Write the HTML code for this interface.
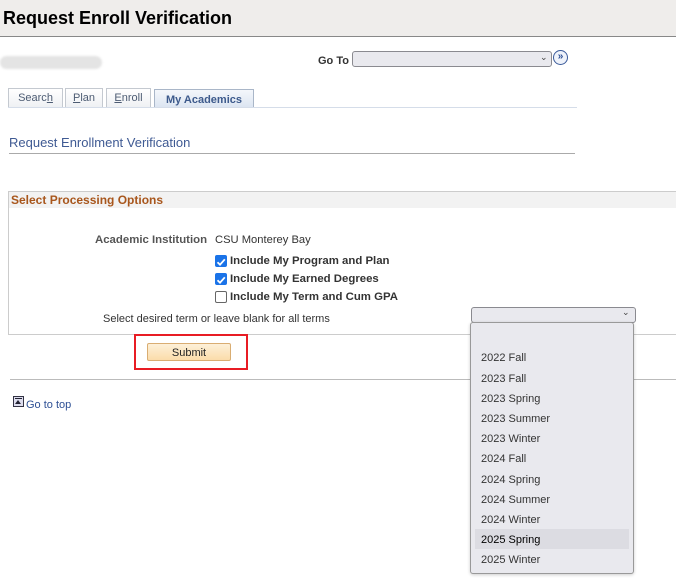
<!DOCTYPE html>
<html><head><style>
*{margin:0;padding:0;box-sizing:border-box}
body{width:676px;height:579px;position:relative;background:#fff;font-family:"Liberation Sans",Arial,sans-serif;overflow:hidden;color:#333}
.a{position:absolute;white-space:nowrap}
.tab{position:absolute;top:88px;height:20px;border:1px solid #c4c9d0;border-bottom:none;background:linear-gradient(#fff,#eef0f3);font-size:11px;color:#4d5c73;text-align:center;line-height:19px}
.cb{position:absolute;left:215px;width:12px;height:12px;border-radius:2px}
.on{background:#1a73e8}
.off{border:1px solid #666;background:#fff}
.lbl{position:absolute;left:230px;font-size:11.4px;font-weight:bold;color:#333}
.it{position:absolute;left:481px;font-size:11px;color:#333}
</style></head><body>
<div class="a" style="left:0;top:0;width:676px;height:37px;background:#efedeb;border-bottom:1px solid #888"></div>
<div class="a" style="left:3px;top:8px;font-size:18px;font-weight:bold;color:#000">Request Enroll Verification</div>
<div class="a" style="left:0;top:56px;width:102px;height:13px;background:#e4e4e4;border-radius:7px;filter:blur(1px)"></div>
<div class="a" style="left:318px;top:55px;font-size:11px;font-weight:bold;color:#333">Go To</div>
<div class="a" style="left:352px;top:51px;width:200px;height:16px;background:#e9e9ee;border:1px solid #8a8a90;border-radius:3px"></div>
<div class="a" style="left:540px;top:52px;font-size:9px;color:#444">&#8964;</div>
<div class="a" style="left:553px;top:50px;width:15px;height:15px;border:1px solid #3a5a9a;border-radius:50%;background:#eef2fa;font-size:10px;font-weight:bold;color:#2d4f94;text-align:center;line-height:12px">»</div>
<div class="tab" style="left:8px;width:55px">Searc<u>h</u></div>
<div class="tab" style="left:65px;width:38px"><u>P</u>lan</div>
<div class="tab" style="left:106px;width:45px"><u>E</u>nroll</div>
<div class="tab" style="left:154px;width:100px;background:linear-gradient(#f4f7fb,#dbe4f1);border-color:#a9b6c8;font-weight:bold;color:#3d5a8c;top:89px;height:19px;line-height:20px">My Academics</div>
<div class="a" style="left:8px;top:107px;width:569px;height:1px;background:#d5dde9"></div>
<div class="a" style="left:9px;top:135px;font-size:13px;color:#3f5a93">Request Enrollment Verification</div>
<div class="a" style="left:9px;top:153px;width:566px;height:1px;background:#aaa"></div>
<div class="a" style="left:8px;top:191px;width:670px;height:144px;border:1px solid #ccc"></div>
<div class="a" style="left:9px;top:192px;width:668px;height:16px;background:#f2f2f2"></div>
<div class="a" style="left:11px;top:193px;font-size:12px;font-weight:bold;color:#a8561c">Select Processing Options</div>
<div class="a" style="left:95px;top:234px;font-size:11.4px;font-weight:bold;color:#555">Academic Institution</div>
<div class="a" style="left:215px;top:234px;font-size:11.2px;color:#333">CSU Monterey Bay</div>
<div class="cb on" style="top:255px"><svg width="12" height="12"><path d="M2.5 6.2 L5 8.7 L9.8 3.3" stroke="#fff" stroke-width="1.8" fill="none"/></svg></div>
<div class="cb on" style="top:273px"><svg width="12" height="12"><path d="M2.5 6.2 L5 8.7 L9.8 3.3" stroke="#fff" stroke-width="1.8" fill="none"/></svg></div>
<div class="cb off" style="top:291px"></div>
<div class="lbl" style="top:255px">Include My Program and Plan</div>
<div class="lbl" style="top:273px">Include My Earned Degrees</div>
<div class="lbl" style="top:291px">Include My Term and Cum GPA</div>
<div class="a" style="left:103px;top:313px;font-size:11px;color:#333">Select desired term or leave blank for all terms</div>
<div class="a" style="left:471px;top:307px;width:165px;height:16px;background:#e9e9ee;border:1px solid #8a8a90;border-radius:3px"></div>
<div class="a" style="left:622px;top:307px;font-size:9px;color:#444">&#8964;</div>
<div class="a" style="left:134px;top:334px;width:114px;height:36px;border:2px solid #e81c24"></div>
<div class="a" style="left:147px;top:343px;width:84px;height:18px;background:linear-gradient(#fdf0d8,#fbdcaa);border:1px solid #d9ad72;border-radius:2px;font-size:11px;text-align:center;line-height:19px;color:#222">Submit</div>
<div class="a" style="left:10px;top:379px;width:666px;height:1px;background:#bbb"></div>
<div class="a" style="left:13px;top:396px;width:11px;height:11px;border:1px solid #334;background:#dde"><div style="position:absolute;left:1px;top:1px;width:7px;height:1px;background:#223"></div><div style="position:absolute;left:1px;top:3px;width:0;height:0;border-left:3.5px solid transparent;border-right:3.5px solid transparent;border-bottom:4px solid #223"></div></div>
<div class="a" style="left:26px;top:399px;font-size:11px;color:#2d4f94">Go to top</div>
<div class="a" style="left:470px;top:322px;width:164px;height:252px;background:#e9e9ee;border:1px solid #999;border-radius:3px;box-shadow:0 1px 3px rgba(0,0,0,.2)"></div>
<div class="a" style="left:475px;top:529px;width:154px;height:20px;background:#dcdce2"></div>
<div class="it" style="top:352px">2022 Fall</div>
<div class="it" style="top:373px">2023 Fall</div>
<div class="it" style="top:393px">2023 Spring</div>
<div class="it" style="top:413px">2023 Summer</div>
<div class="it" style="top:433px">2023 Winter</div>
<div class="it" style="top:453px">2024 Fall</div>
<div class="it" style="top:474px">2024 Spring</div>
<div class="it" style="top:494px">2024 Summer</div>
<div class="it" style="top:514px">2024 Winter</div>
<div class="it" style="top:534px;color:#000">2025 Spring</div>
<div class="it" style="top:554px">2025 Winter</div>
</body></html>
